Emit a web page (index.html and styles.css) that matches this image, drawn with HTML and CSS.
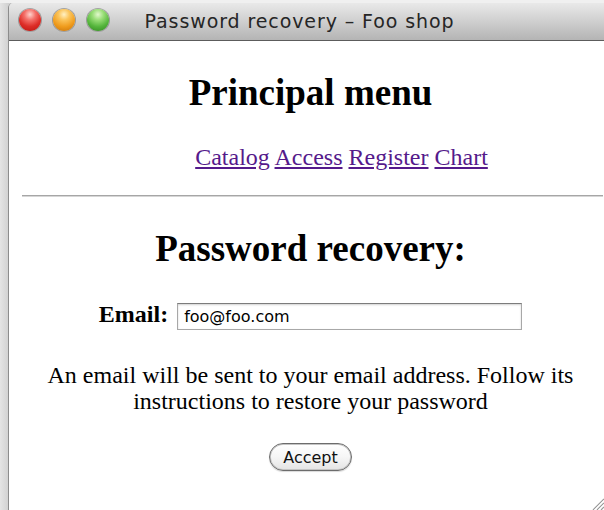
FILE: index.html
```html
<!DOCTYPE html>
<html lang="en">
<head>
<meta charset="utf-8">
<title>Password recovery – Foo shop</title>
<link rel="stylesheet" href="styles.css">
</head>
<body>
<div class="desktop">
  <div class="window">
    <div class="titlebar">
      <div class="lights">
        <span class="light red"></span>
        <span class="light yellow"></span>
        <span class="light green"></span>
      </div>
      <div class="title">Password recovery – Foo shop</div>
    </div>
    <div class="content">
      <h2 class="menu-title">Principal menu</h2>
      <nav class="menu">
        <a href="#catalog">Catalog</a> <a href="#access">Access</a> <a href="#register">Register</a> <a href="#chart">Chart</a>
      </nav>
      <hr class="rule">
      <h2 class="page-title">Password recovery:</h2>
      <form class="recovery" onsubmit="return false">
        <div class="field">
          <label class="field-label" for="email">Email:</label>
          <input class="field-input" id="email" type="text" value="foo@foo.com">
        </div>
        <p class="note">An email will be sent to your email address. Follow its instructions to restore your password</p>
        <button class="accept" type="submit">Accept</button>
      </form>
    </div>
  </div>
</div>
<svg class="grip" width="14" height="14" viewBox="0 0 14 14" aria-hidden="true">
  <path d="M3 14 L14 3 M7 14 L14 7 M11 14 L14 11" stroke="#9a9a9a" stroke-width="1.2" fill="none"/>
  <path d="M4 14 L14 4 M8 14 L14 8" stroke="#f4f4f4" stroke-width="0.8" fill="none"/>
</svg>
</body>
</html>
```
FILE: styles.css
```css
html, body {
  margin: 0;
  padding: 0;
  width: 604px;
  height: 510px;
  overflow: hidden;
}

body {
  position: relative;
  background: linear-gradient(to right, #e4e4e4 0, #d2d2d2 8px);
  font-family: "Liberation Serif", "Times New Roman", serif;
  color: #000;
}

.desktop {
  padding: 3px 0 0 8px;
  background: linear-gradient(#f0f0f0, #f0f0f0 3px, transparent 3px);
}

.window {
  width: 603px;
  height: 507px;
  border-left: 1px solid #8c8c8c;
  border-top-left-radius: 5px;
  display: flex;
  flex-direction: column;
  overflow: hidden;
}

/* title bar: lights and the title share one grid cell */
.titlebar {
  height: 37px;
  display: grid;
  background: linear-gradient(#e9e9e9 0, #d4d4d4 40%, #b4b4b4 100%);
  border-top: 1px solid #f6f6f6;
  border-bottom: 1px solid #5c5c5c;
  box-sizing: content-box;
  margin-top: -1px;
}

.lights,
.title {
  grid-area: 1 / 1;
}

.lights {
  display: flex;
  gap: 12px;
  padding: 6px 0 0 10px;
}

.light {
  width: 22px;
  height: 22px;
  border-radius: 50%;
  box-shadow: 0 0 0 1px rgba(0, 0, 0, 0.28), 0 1px 1px rgba(255, 255, 255, 0.5);
}

.red {
  background: radial-gradient(circle at 50% 25%, #ffd3cd 0, #f4716a 28%, #dd2d27 60%, #b5150f 100%);
}

.yellow {
  background: radial-gradient(circle at 50% 25%, #fff1c4 0, #fbc45a 28%, #ef9b1c 62%, #c4700a 100%);
}

.green {
  background: radial-gradient(circle at 50% 25%, #e2f8cd 0, #9ade78 28%, #55b53c 62%, #2f8420 100%);
}

.title {
  padding-right: 22px;
  text-align: center;
  line-height: 37px;
  font-family: "DejaVu Sans", "Liberation Sans", sans-serif;
  font-size: 19px;
  letter-spacing: 0.9px;
  color: #262626;
}

/* page body */
.content {
  flex: 1;
  background: #fff;
  padding: 0 13px;
  display: flex;
  flex-direction: column;
  align-items: center;
  text-align: center;
}

.menu-title,
.page-title {
  margin: 0;
  font-size: 37px;
  line-height: 44px;
  font-weight: bold;
}

.menu-title {
  margin-top: 30px;
}

.menu {
  margin-top: 28px;
  padding-left: 62px;
  font-size: 24px;
  line-height: 28px;
}

.menu a {
  color: #551a8b;
}

.rule {
  align-self: stretch;
  margin: 24px -4px 0 0;
  height: 0;
  border: 0;
  border-top: 1px solid #a6a6a6;
  border-bottom: 1px solid #d6d6d6;
}

.page-title {
  margin-top: 30px;
}

.recovery {
  display: flex;
  flex-direction: column;
  align-items: center;
  align-self: stretch;
}

.field {
  margin-top: 29px;
  display: flex;
  align-items: center;
  gap: 9px;
}

.field-label {
  font-size: 24px;
  line-height: 28px;
  font-weight: bold;
  margin-bottom: 5px;
}

.field-input {
  box-sizing: border-box;
  width: 345px;
  height: 27px;
  margin: 0;
  padding: 0 6px;
  border: 1px solid #a8a8a8;
  border-top-color: #7c7c7c;
  box-shadow: inset 0 1px 2px rgba(0, 0, 0, 0.18);
  font-family: "DejaVu Sans", "Liberation Sans", sans-serif;
  font-size: 16px;
  color: #000;
  background: #fff;
}

.note {
  margin: 29px 0 0;
  font-size: 24px;
  line-height: 26px;
}

.accept {
  margin-top: 29px;
  box-sizing: border-box;
  width: 83px;
  height: 28px;
  padding: 0;
  border: 1px solid #6c6c6c;
  border-radius: 14px;
  background: linear-gradient(#ffffff 0, #f6f6f6 50%, #e4e4e4 100%);
  box-shadow: inset 0 0 0 1px #c4c4c4, 0 1px 1px rgba(0, 0, 0, 0.15);
  font-family: "DejaVu Sans", "Liberation Sans", sans-serif;
  font-size: 16px;
  color: #111;
}

.grip {
  position: absolute;
  right: 0;
  bottom: 0;
}
```
